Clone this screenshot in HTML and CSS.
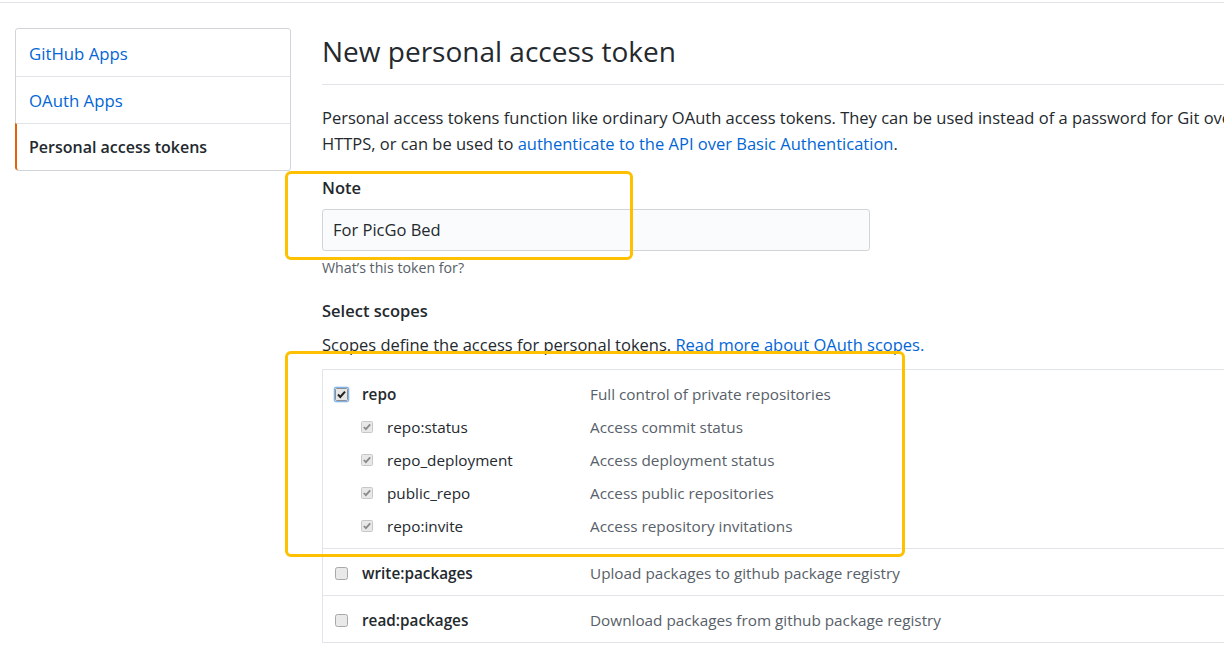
FILE: index.html
```html
<!DOCTYPE html>
<html lang="en">
<head>
<meta charset="utf-8">
<title>New personal access token</title>
<link rel="stylesheet" href="styles.css">
</head>
<body>
<div class="topline"></div>
<div class="layout">
  <nav class="menu">
    <a class="menu-item" href="#">GitHub Apps</a>
    <a class="menu-item second" href="#">OAuth Apps</a>
    <a class="menu-item selected" href="#">Personal access tokens</a>
  </nav>
  <main class="main">
    <h2 class="title">New personal access token</h2>
    <p class="intro">Personal access tokens function like ordinary OAuth access tokens. They can be used instead of a password for Git over<br>HTTPS, or can be used to <a href="#">authenticate to the API over Basic Authentication</a>.</p>

    <div class="field">
      <label class="field-label">Note</label>
      <div class="input">For PicGo Bed</div>
      <p class="hint">What’s this token for?</p>
    </div>

    <div class="scopes">
      <h3 class="field-label">Select scopes</h3>
      <p class="scopes-desc">Scopes define the access for personal tokens. <a href="#">Read more about OAuth scopes.</a></p>
      <ul class="scope-list">
        <li class="scope">
          <div class="scope-row">
            <span class="cb cb-focus"><svg width="13" height="13" viewBox="0 0 13 13"><rect x="0.5" y="0.5" width="12" height="12" rx="1" fill="#e6e6e6" stroke="#8f8f8f"/><path d="M3 6.5 L5.3 9 L10 3.6" fill="none" stroke="#222" stroke-width="2"/></svg></span>
            <span class="scope-name">repo</span>
            <span class="scope-desc">Full control of private repositories</span>
          </div>
          <div class="scope-row child">
            <span class="cb cb-dis"><svg width="12" height="12" viewBox="0 0 12 12"><rect x="0.5" y="0.5" width="11" height="11" rx="1" fill="#e8e8e8" stroke="#c8c8c8"/><path d="M2.8 6 L4.9 8.2 L9.2 3.4" fill="none" stroke="#8a8a8a" stroke-width="1.8"/></svg></span>
            <span class="scope-name">repo:status</span>
            <span class="scope-desc">Access commit status</span>
          </div>
          <div class="scope-row child">
            <span class="cb cb-dis"><svg width="12" height="12" viewBox="0 0 12 12"><rect x="0.5" y="0.5" width="11" height="11" rx="1" fill="#e8e8e8" stroke="#c8c8c8"/><path d="M2.8 6 L4.9 8.2 L9.2 3.4" fill="none" stroke="#8a8a8a" stroke-width="1.8"/></svg></span>
            <span class="scope-name">repo_deployment</span>
            <span class="scope-desc">Access deployment status</span>
          </div>
          <div class="scope-row child">
            <span class="cb cb-dis"><svg width="12" height="12" viewBox="0 0 12 12"><rect x="0.5" y="0.5" width="11" height="11" rx="1" fill="#e8e8e8" stroke="#c8c8c8"/><path d="M2.8 6 L4.9 8.2 L9.2 3.4" fill="none" stroke="#8a8a8a" stroke-width="1.8"/></svg></span>
            <span class="scope-name">public_repo</span>
            <span class="scope-desc">Access public repositories</span>
          </div>
          <div class="scope-row child">
            <span class="cb cb-dis"><svg width="12" height="12" viewBox="0 0 12 12"><rect x="0.5" y="0.5" width="11" height="11" rx="1" fill="#e8e8e8" stroke="#c8c8c8"/><path d="M2.8 6 L4.9 8.2 L9.2 3.4" fill="none" stroke="#8a8a8a" stroke-width="1.8"/></svg></span>
            <span class="scope-name">repo:invite</span>
            <span class="scope-desc">Access repository invitations</span>
          </div>
        </li>
        <li class="scope">
          <div class="scope-row">
            <span class="cb"><svg width="13" height="13" viewBox="0 0 13 13"><rect x="0.5" y="0.5" width="12" height="12" rx="2" fill="#e9e9e9" stroke="#a8a8a8"/></svg></span>
            <span class="scope-name">write:packages</span>
            <span class="scope-desc">Upload packages to github package registry</span>
          </div>
        </li>
        <li class="scope">
          <div class="scope-row">
            <span class="cb"><svg width="13" height="13" viewBox="0 0 13 13"><rect x="0.5" y="0.5" width="12" height="12" rx="2" fill="#e9e9e9" stroke="#a8a8a8"/></svg></span>
            <span class="scope-name">read:packages</span>
            <span class="scope-desc">Download packages from github package registry</span>
          </div>
        </li>
      </ul>
    </div>

    <div class="annot annot-note"></div>
    <div class="annot annot-scopes"></div>
  </main>
</div>
</body>
</html>
```

FILE: styles.css
```css
html, body {
  margin: 0;
  padding: 0;
  overflow: hidden;
  background: #fff;
}
body {
  font-family: "Open Sans", "Noto Sans", sans-serif;
  font-size: 16.5px;
  color: #24292e;
}
a { color: #0366d6; text-decoration: none; }

.topline {
  margin-top: 2px;
  height: 1px;
  background: #e1e4e8;
}
.layout {
  display: flex;
  align-items: flex-start;
  padding-left: 15px;
  gap: 31px;
  padding-top: 25px;
  width: 1400px;
}
.menu {
  width: 274px;
  border: 1px solid #d1d5da;
  border-radius: 3px;
  display: flex;
  flex-direction: column;
  flex-shrink: 0;
}
.menu-item {
  display: flex;
  align-items: center;
  height: 44px;
  padding: 2px 0 0 13px;
  border-top: 1px solid #e1e4e8;
  color: #0366d6;
  font-size: 16.8px;
}
.menu-item:first-child { border-top: 0; height: 45px; padding-top: 2px; }
.menu-item.second { padding-top: 0; height: 46px; }
.menu-item.selected {
  color: #24292e;
  font-weight: 600;
  font-size: 16px;
  border-left: 2px solid #e36209;
  margin-left: -1px;
  padding-left: 12px;
  padding-top: 0;
  height: 46px;
  border-bottom-left-radius: 3px;
}

.main {
  position: relative;
  width: 1000px;
  flex-shrink: 0;
}
.title {
  margin: 0;
  font-weight: 400;
  font-size: 28px;
  line-height: 40px;
  padding-top: 3px;
  padding-bottom: 13px;
  border-bottom: 1px solid #e1e4e8;
}
.intro {
  margin: 20px 0 0;
  line-height: 26px;
  white-space: nowrap;
}

.field { margin-top: 19px; }
.field-label {
  display: block;
  margin: 0;
  font-size: 16.5px;
  font-weight: 600;
  line-height: 24px;
}
.input {
  margin-top: 9px;
  width: 526px;
  height: 40px;
  line-height: 40px;
  padding: 0 10px;
  border: 1px solid #d1d5da;
  border-radius: 3px;
  background: #fafbfc;
}
.hint {
  margin: 8px 0 0;
  font-size: 14.2px;
  color: #586069;
  line-height: 18px;
}
.scopes { margin-top: 22px; }
.scopes-desc {
  margin: 10px 0 0;
  line-height: 24px;
}
.scope-list {
  list-style: none;
  margin: 12px 0 0;
  padding: 0;
  border-top: 1px solid #e1e4e8;
  border-left: 1px solid #e1e4e8;
  font-size: 15.3px;
}
.scope {
  padding: 13px 0 11px 12px;
  border-bottom: 1px solid #e1e4e8;
}
.scope-row {
  display: flex;
  align-items: center;
  height: 22px;
}
.scope-row.child { margin-top: 11px; padding-left: 26px; }
.cb {
  display: flex;
  width: 27px;
  flex-shrink: 0;
}
.child .cb { width: 26px; }
.cb-focus svg {
  outline: 1px solid #7eb4ea;
  border-radius: 1px;
  box-shadow: 0 0 0 1.5px #b6d3f2;
}
.scope-name {
  width: 228px;
  flex-shrink: 0;
  font-weight: 600;
}
.child .scope-name { width: 203px; font-weight: 400; }
.scope-desc { color: #586069; }

.annot {
  position: absolute;
  box-sizing: border-box;
  border: 3.5px solid #ffc000;
  border-radius: 6px;
  pointer-events: none;
}
.annot-note { left: -37px; top: 143px; width: 348px; height: 89px; }
.annot-scopes { left: -37px; top: 323px; width: 620px; height: 206px; }
```
